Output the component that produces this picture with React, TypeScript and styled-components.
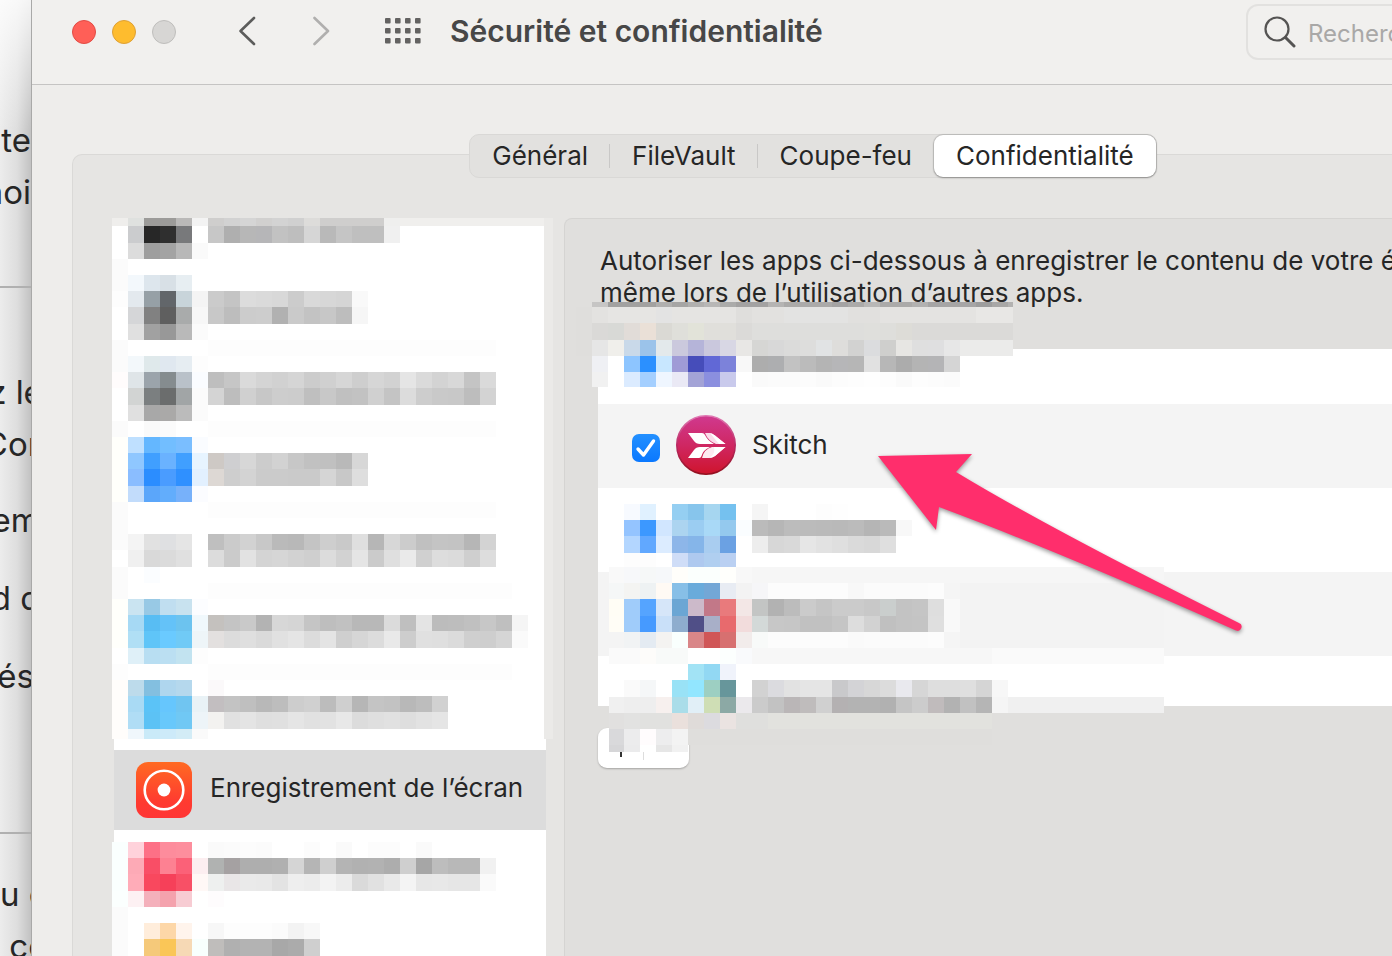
import React from "react";
import styled, { createGlobalStyle } from "styled-components";

const GlobalStyle = createGlobalStyle`
  * { box-sizing: border-box; }
  body { margin: 0; background: #f4f4f4; }
  body, button, input { font-family: Inter, "Liberation Sans", sans-serif; }
`;

const Screen = styled.div`
  position: relative;
  display: flex;
  height: 100vh;
  overflow: hidden;
  color: #262626;
`;

/* Page that lies behind the window */

const Backdrop = styled.aside`
  flex: none;
  width: 32px;
  overflow: hidden;
  padding-top: 114px;
  border-right: 1px solid #a9a9a8;
  background: linear-gradient(to bottom, #ffffffd0, #ffffff00 130px),
    linear-gradient(to right, #ececec, #dedede 55%, #c2c2c2);
`;

const Snippet = styled.p<{ $align?: string; $gap?: number }>`
  display: flex;
  justify-content: ${(p) => p.$align ?? "center"};
  margin: ${(p) => p.$gap ?? 0}px 0 0;
  font-size: 33px;
  line-height: 52px;
  white-space: pre;
`;

const Rule = styled.hr<{ $gap: number }>`
  margin: ${(p) => p.$gap}px 0 0;
  border: 0;
  border-top: 2px solid #b0b0b0;
`;

/* Window frame */

const Window = styled.main`
  flex: 1;
  min-width: 0;
  margin-right: -202px;
  display: flex;
  flex-direction: column;
  background: #eeedeb;
`;

const TitleBar = styled.header`
  flex: none;
  display: flex;
  align-items: flex-start;
  height: 85px;
  padding: 4px 20px 0 40px;
  border-bottom: 1px solid #c5c4c3;
  background: #f1f0ee;
`;

const BarGroup = styled.div<{ $gap: number; $after: number; $height?: number }>`
  display: flex;
  align-items: center;
  height: ${(p) => p.$height ?? 54}px;
  gap: ${(p) => p.$gap}px;
  margin-right: ${(p) => p.$after}px;
`;

const Light = styled.button<{ $fill: string; $edge: string }>`
  width: 24px;
  height: 24px;
  padding: 0;
  border: 1px solid ${(p) => p.$edge};
  border-radius: 50%;
  background: ${(p) => p.$fill};
`;

const IconButton = styled.button`
  display: flex;
  padding: 0;
  border: 0;
  background: none;
`;

const Title = styled.h1`
  margin: 0;
  font-size: 30px;
  font-weight: 600;
  line-height: 54px;
  color: #474747;
  white-space: nowrap;
`;

const Search = styled.label`
  display: flex;
  align-items: center;
  gap: 12px;
  width: 328px;
  height: 56px;
  margin-left: auto;
  padding-left: 16px;
  border: 2px solid #e2e1df;
  border-radius: 12px;
`;

const SearchInput = styled.input`
  flex: 1;
  min-width: 0;
  padding: 2px 0 0;
  border: 0;
  outline: 0;
  background: none;
  font-size: 24px;
  &::placeholder { color: #a9a8a7; opacity: 1; }
`;

/* Tabs */

const Body = styled.div`
  flex: 1;
  display: flex;
  flex-direction: column;
  padding: 49px 40px 0;
`;

const Tabs = styled.nav`
  z-index: 1;
  align-self: center;
  display: flex;
  align-items: center;
  height: 44px;
  margin-bottom: -24px;
  border: 1px solid #d9d8d6;
  border-radius: 10px;
  background: #e2e1df;
`;

const Tab = styled.button<{ $active?: boolean; $divided?: boolean }>`
  position: relative;
  height: 42px;
  padding: 0 22px;
  border: 0;
  border-radius: 9px;
  background: ${(p) => (p.$active ? "#ffffff" : "transparent")};
  box-shadow: ${(p) => (p.$active ? "0 0 1px 1px #00000022, 0 1px 2px #00000040" : "none")};
  color: #262626;
  font-size: 26px;
  line-height: 40px;
  &::after {
    content: "";
    display: ${(p) => (p.$divided ? "block" : "none")};
    position: absolute;
    right: 0;
    top: 9px;
    width: 1px;
    height: 24px;
    background: #c9c8c7;
  }
`;

const Group = styled.section`
  flex: 1;
  display: flex;
  align-items: stretch;
  gap: 11px;
  padding: 63px 39px 0;
  border: 1px solid #dad9d7;
  border-bottom: 0;
  border-radius: 10px 10px 0 0;
  background: #e6e5e3;
`;

/* Left list */

const Sidebar = styled.div`
  flex: none;
  width: 441px;
  height: 0;
`;

const HiddenBlock = styled.div<{ $after?: boolean }>`
  width: ${(p) => (p.$after ? 434 : 441)}px;
  border-right: ${(p) => (p.$after ? 0 : 9)}px solid #ebeae8;
  background: #ffffff;
`;

const Selected = styled.div`
  display: flex;
  align-items: center;
  gap: 18px;
  width: 432px;
  height: 103px;
  margin-left: 2px;
  padding-left: 22px;
  border-top: 11px solid #ffffff;
  border-bottom: 12px solid #ffffff;
  background: #dcdcdc;
`;

const SelectedLabel = styled.span`
  padding-bottom: 4px;
  font-size: 26px;
  line-height: 32px;
  white-space: nowrap;
`;

/* Right panel */

const Panel = styled.div`
  flex: 1;
  min-width: 0;
  padding: 26px 33px 0;
  border: 1px solid #d5d4d2;
  border-bottom: 0;
  border-radius: 8px 8px 0 0;
  background: #e0dfdd;
`;

const Intro = styled.p`
  margin: 0 0 40px;
  padding-left: 2px;
  font-size: 26px;
  line-height: 32px;
  white-space: nowrap;
`;

const AppList = styled.div`
  position: relative;
`;

const AppRow = styled.div<{ $shade?: boolean; $height?: number }>`
  display: flex;
  align-items: ${(p) => (p.$shade ? "center" : "flex-end")};
  height: ${(p) => p.$height ?? 84}px;
  padding-left: 26px;
  background: ${(p) => (p.$shade ? "#f4f4f4" : "#ffffff")};
`;

const AppLabel = styled.label`
  display: flex;
  align-items: center;
  gap: 16px;
  padding: 0 0 2px 8px;
  font-size: 26px;
  line-height: 32px;
`;

const Check = styled.input`
  appearance: none;
  width: 28px;
  height: 28px;
  margin: 6px 0 0;
  border-radius: 7px;
  background: url("data:image/svg+xml,%3Csvg xmlns='http://www.w3.org/2000/svg' viewBox='0 0 28 28'%3E%3Cpath d='M6 15l5.500 6L21.500 7' fill='none' stroke='white' stroke-width='3.400' stroke-linecap='round' stroke-linejoin='round'/%3E%3C/svg%3E"),
    linear-gradient(#2390ff, #0a78ff);
`;

const Overlay = styled.div<{ $x: number; $y: number }>`
  position: absolute;
  left: ${(p) => p.$x}px;
  top: ${(p) => p.$y}px;
`;

const Stepper = styled.div`
  display: flex;
  align-items: center;
  width: 91px;
  height: 40px;
  margin-top: 22px;
  border-radius: 9px;
  background: #ffffff;
  box-shadow: 0 1px 2px #00000044;
`;

const StepButton = styled.button<{ $divided?: boolean }>`
  flex: 1;
  display: flex;
  justify-content: center;
  height: 24px;
  padding: 4px 0 0;
  border: 0;
  border-right: ${(p) => (p.$divided ? 1 : 0)}px solid #dddddd;
  background: none;
`;

const Drawing = styled.svg`
  display: block;
  flex: none;
`;

const Pointer = styled.svg`
  position: absolute;
  left: 870px;
  top: 446px;
  filter: drop-shadow(0 2px 2px #00000066);
`;

/* Pixelated areas: each line is a list of 16px cells, "cd" being a grey and "." a gap.
   "xx*n" repeats a cell n times. */

type MosaicProps = { lines: string[]; width: number; top?: number; left?: number; height: number };

const hex = (cell: string) => "#" + (cell.length === 2 ? cell.repeat(3) : cell);

function Mosaic({ lines, width, top = 0, left = 0, height }: MosaicProps) {
  return (
    <Drawing width={width} height={height} viewBox={`${left} ${top} ${width} ${height}`} shapeRendering="crispEdges" aria-hidden>
      {lines.flatMap((line, row) => {
        const y = Math.round(row * 16.2);
        const h = Math.round((row + 1) * 16.2) - y;
        let x = 0;
        return line.split(" ").filter(Boolean).map((token, i) => {
          const [cell, times] = token.split("*");
          const w = 16 * Number(times ?? 1);
          const at = x;
          x += w;
          return cell === "." ? null : <rect key={`${row}-${i}`} x={at} y={y} width={w} height={h} fill={hex(cell)} />;
        });
      })}
    </Drawing>
  );
}

const firstItem = [
  "",
  "efeeec dfe1df 9c9b99*2 bab9b8 f3 cfcecd d2 d5 d1d0cf d3 d0 dddcda cfcecd*4 efefee f0efed*9",
  ". cbccce 27 2f 78797b ff c7 af b7 b6b6b8 c2 be d6 b9 c5 bf bf f0",
  ". dc 9e a3 b8 fa",
  "fb",
];

const itemsBefore = [
  [
    "fb f3f8fc dde6ed d8e0e6 e7eef2",
    "fd e3e9ee 96a0a6 62666a c8d4da f4 cb c4 dc da d8 cc d9 d7 d5 f9",
    ". d5d6d8 81 5f a9abab f7 c8 bd cc cd b1 ca c3 c7 bd f6",
    ". e0 a1 98 b9 fb",
    "fb . . . . . fd*18",
  ],
  [
    "fb f3f8fb dfe9eb e0e8f0 e6edf2 fd",
    "fffcfc dfe5e8 9ba4ab 858c8f b9c1c9 fafcff be c6 da d4 d1 d5 cc d0 d6 ce d6 d2 e5 da d3 d8 c4 da",
    ". d2d4d3 7b7f80 6b6d6d a1a5a6 fb d4 bd d0 c7 cd cc bf c8 c0 c2 d0 c4 dc cd c9 c8 bd d3",
    ". e0 a8 aaa9a8 bb fb",
    "fb . fa fb . . fd*18",
  ],
  [
    "fffffb bfe0ff 64b7ff 72beff 7abeff fafcff",
    "fffffb 8fc7ff 409fff 6ab2ff 409fff e7f4ff cec9c5 cfcfd1 d7 cc d2 c7 c1 c0 b9 d7",
    "fffffb 8abdff 2b8dff 4a9cff 2f90ff e2f0ff ddd8d4 ce d3 cb*2 ca*2 d5 c8 de",
    "fffffb c2dcfb 5ba6fa 62adfc 77b1fa fbfcff",
    "fb . . . . . fd*18",
  ],
  [
    "fb",
    "fb f4 e1 dfe0e2 e5 ff bf cb d2 c8 ba b8 c4 ce c9 df b6 d7 cc c0 c4 c3 b6 d3",
    ". f0 d9 db e0 ff dc cb e2 d4 d6 d2 cf dc d2 e5 cb df ea d0 dd db cf dd",
    "fb . fbfdff",
    "fb . . . . . fd*19",
  ],
  [
    "fffffb cae4f1 98c9e5 c0def0 c8e2ef fcfdff",
    "fffffb a6d9f4 58bdf3 64c2f8 6cc3ef f0f8fc c4c1be c4 c9 b3 d7 d5 c5 be c1 b8 b8 db bf e4 bc bd c0 c7 bf f5",
    "fffffb b0dff5 5fc5f8 6acaff 70caf6 eef5f8 e3e0df dc df da e1 e5 dc e4 cf d6 dc e9 cd e0 df db cf ce d5 fa",
    ". dff0f8 b8def2 bbdff2 c2e3f0 fd",
    "fd . . . . . fd*19",
  ],
];

const lastBefore = [
  "fffdfb bddbeb 83bfe0 afd6ee b5d8ed . fbf9fa",
  "fffdfb a9daf4 5bc3f7 66c6fd 70c5f1 e9f2f6 c2bec0 c3 bf b8 bd cd d0 bc cf b6 c4 c2 b8 bd d1",
  "fffdfb b0ddf5 5cc2f5 68c8fb 70c8f4 edf4f8 f3f2f0 e1 e4 df e0 e5 e1 e2 e8 dc df e1 de e2 e5",
  "fffdfb f0f7fc caeaf8 cdeaf9 d3ecf6 fa",
];

const itemsAfter = [
  [
    "fafffe ffd2db fd7086 fd8c9c fd8e9d ff fa fb fc fb . . fc . fa . fc fc . fa",
    "fafffe fdaab6 f94e66 fd8192 fb6178 fceef0 b0b2b1 a5a1a2 ae ae b0 d5 b5 cf b4 b1 b2 ad cf a6 bd b8 b8 f1",
    "fafffe ffacb8 f9485e f64059 f85066 fff8f6 eef0ef e9e6e7 ea e9 e3 ee ec f3 ec da e1 e9 f4 e7 e8 e6 e6 fa",
    "fbfffe fdf1f3 f4b0bb f4a2ad f7ccd3 . fefcfd",
    "fb",
  ],
  [
    "fb . ffeddb fdd7a8 fff4ec . f7 fd fd fd fb f3 f8",
    "fb . f5c97a fac657 f6d9b5 f8fffd bfbdbb b0 b3 b3 a8 ab cf",
    "fb . f5c97a fac657 f6d9b5 f8fffd bfbdbb b0 b3 b3 a8 ab cf",
  ],
];

const introBlur = [
  "e0dfdd c6c5c4 a2a1a0*3 b0afae a6a5a4 b1b0af b8b7b6 ababaa a3a2a2*2 b5b4b3 abaaa9*3 a4a3a3 abaaa9 b8b7b6 abaaa9*2 b2b1b0 a6a5a5*3 9d9d9d a8a7a6 b3b2b1",
  "dfdedc e3e2e0 e6e5e3*3 e3e3e3 e5e4e2*4 dfdedc e2e1df*2 e3e3e2*4 e1e0de*2 e4e3e1*6 e8e7e5*3",
  "dfdedc dad9d7 d8d9d6 e1dcd8 eae0d7 dad9d4 dfdfda e2e3d9 e0dfdb*2 dbdad8 dededc*7 dfdfdc dededb dddcd7 dbdad8*9",
  "dfdedc e6e6e6 f0efeb c9d9e9 9bc3ea e3e9eb cbc9dd b5b4d9 cac8dd d8d7e4 e8e7e5 d6d6d4 d8 dbdbda dddddc e1e3e4 dedddb d2d2d1 dbdcde cfcfcd e7e6e3 df dfdfe0 e7 ebebea*4",
  "e0dfdd eff0f4 ff 8dc5ff 2b90ff c8e7ff 9f9bd6 464dba 6168d6 7c82da f8 ad adaeb0 c2 bb b4 b6b6b8 b6 e1 b7 ac b4 b4b4b6 d5 ff*4",
  "e0dfdd f1 ff dbebff a4cfff eff6ff eae9f5 a3a3d6 8b8fdf c9caec ff fa fb fb fc fa fc fd fe fd fa fd fc fb",
];

const rowBlur = [
  "f7faff e0f1ff ff 95cff2 87c5ec a6d6f0 75c1ef ff f5 ff ff ff fd fe",
  "94c4ff 3c98ff d1e6ff acd4f0 9bcdf2 a9d9f7 94c9ee fafdff bb b6 bc bb ba b9 bb b5 ba f8",
  "b3d6ff 61a8ff dcecff 8db6e9 85b5e9 a9cdf0 6ba1e3 ff ed d7 d9 e6 e2 df da d8 df",
  "fd fd . cfddf7 aec9ef b0cff0 bad0f2",
];

const footBlur = [
  "f9 f7f8fa f6f8f8 f6f8fa fffefa fbfffd fbfffd fffffc f8 f6*26",
  "f5f7f7 f4f4f2 eef2f3 fffaf4 87bfe7 69abdb 73a7d6 e8ecf3 f3 f6f6f8 fc*5 f8 fb*4 fc f5 f3*13",
  "fffdf5 a0ccfa 55a4ff d6e6f9 6ba6d4 ccbaca c27888 e97a7c f3e7e6 c3c5c4 b2 bc cb c5 cb cb c8 cacecd c3 c5 de f9 f3*13",
  "fffdf6 a0ccfa 469aff c9e0f9 8eadce 504f87 a8afc8 e86a6d f2dcdc d3d9d8 c7 c6 c1 c1 c5 dd d2 c0 c3 c4 df f9 f3*13",
  "f4 f1f3f4 e4ebf2 f4f3f1 f9fffd d98688 d05657 d77070 f2eceb f8faf9 fc*5 fa fb*4 fc f5 f3*13",
  "fa fa fdfcfa f8faf9*2 ff*2 fcfffe f9fafc f7*15 fa*11",
  "ff*5 a2e3f5 92d8f3 f0f3fb ff*27",
  "ff fa f5f7f8 ff 99e2f6 92e6ff 9dcfc2 67969b ff d2 dbdbdf e2 e5 e5 c9c9cb d3d3d6 d7 dc e9e9ee d6 de de df d5 f7 ff*10",
  "f0 ee ee f7f0ee aadde9 e1eff7 cfdeb5 8ca9a5 ebe9ec cb c2 bab6b7 bfbcbc d0 b4b1b2 b3 b3 b1 c5 cc c0bbbc b2 c1 b5 f5 f0*10",
  "e1e0df e2e2e1 e1e1df*2 eae0dc dfdbd9 dcdbdf eae3e1 dfdfdd*2 e2e2de*14",
  "d9d9db ececed fffcfd ededee f3 dfdedc*19",
  "d6d6d8 ebebec ff e6 f1",
];

function ScreenRecordIcon() {
  return (
    <Drawing width="56" height="56" viewBox="0 0 56 56" aria-hidden>
      <defs>
        <linearGradient id="record" x1="0" y1="0" x2="0" y2="1">
          <stop offset="0" stopColor="#ff6a22" />
          <stop offset="0.7" stopColor="#ff3b30" />
          <stop offset="1" stopColor="#ff3535" />
        </linearGradient>
      </defs>
      <rect width="56" height="56" rx="12" fill="url(#record)" />
      <circle cx="28" cy="28" r="19.300" fill="none" stroke="#fff" strokeWidth="2.600" />
      <circle cx="28" cy="28" r="6.400" fill="#fff" />
    </Drawing>
  );
}

function SkitchIcon() {
  return (
    <Drawing width="60" height="60" viewBox="0 0 60 60" aria-hidden>
      <defs>
        <linearGradient id="skitch" x1="0" y1="0" x2="0" y2="1">
          <stop offset="0" stopColor="#d0398f" />
          <stop offset="0.5" stopColor="#cf2763" />
          <stop offset="1" stopColor="#cf142c" />
        </linearGradient>
        <linearGradient id="rim" x1="0" y1="0" x2="0" y2="1">
          <stop offset="0" stopColor="#e07ab4" />
          <stop offset="0.5" stopColor="#b92a63" />
          <stop offset="1" stopColor="#94101f" />
        </linearGradient>
      </defs>
      <circle cx="30" cy="30" r="29.200" fill="url(#skitch)" stroke="url(#rim)" strokeWidth="1.600" />
      <path d="M12 18H26Q28 18 29 20Q31 25 38 29H24Q20 29 18 26Z" fill="#fff" />
      <path d="M29 18H34Q36 18 39 20.500L49.500 29H40Q32 26 29 18Z" fill="#fbdcea" />
      <path d="M34 18Q36 18 39 20.500L49.500 29H43Q38 23 34 18Z" fill="#fff" />
      <path d="M12 43L18 35Q20 32 24 32H34Q27 35 25.500 41Q25 43 23 43Z" fill="#fff" />
      <path d="M26 43Q28 34 36 32H49.500L39 41Q36 43 33 43Z" fill="#fdeaf0" />
      <path d="M38 32H49.500L39 41Q36 43 33 43Q40 39 38 32Z" fill="#fff" />
    </Drawing>
  );
}

export default function App() {
  return (
    <Screen>
      <GlobalStyle />
      <Backdrop>
        <Snippet $align="flex-end">te</Snippet>
        <Snippet $align="flex-end">moi</Snippet>
        <Rule $gap={68} />
        <Snippet $gap={78}>z le</Snippet>
        <Snippet>Con</Snippet>
        <Snippet $gap={24}>em</Snippet>
        <Snippet $gap={26}>d d</Snippet>
        <Snippet $gap={26}>és</Snippet>
        <Rule $gap={130} />
        <Snippet $gap={34} $align="flex-start">u c</Snippet>
        <Snippet $align="flex-start">{" co"}</Snippet>
      </Backdrop>

      <Window>
        <TitleBar>
          <BarGroup $gap={16} $after={62} $height={56}>
            <Light $fill="#ff5f57" $edge="#e24b44" aria-label="Fermer" />
            <Light $fill="#febc2e" $edge="#dea035" aria-label="Réduire" />
            <Light $fill="#d7d6d4" $edge="#bfbebc" aria-label="Agrandir" />
          </BarGroup>
          <BarGroup $gap={57} $after={54}>
            <IconButton aria-label="Précédent">
              <Drawing width="18" height="30" viewBox="0 0 18 30">
                <path d="M16 2L2.500 15L16 28" fill="none" stroke="#5c5c5b" strokeWidth="2.600" strokeLinecap="round" strokeLinejoin="round" />
              </Drawing>
            </IconButton>
            <IconButton aria-label="Suivant">
              <Drawing width="18" height="30" viewBox="0 0 18 30">
                <path d="M1.500 2L15 15L1.500 28" fill="none" stroke="#b0afae" strokeWidth="2.600" strokeLinecap="round" strokeLinejoin="round" />
              </Drawing>
            </IconButton>
          </BarGroup>
          <BarGroup $gap={29} $after={0}>
            <IconButton aria-label="Tout afficher">
              <Drawing width="36" height="26" viewBox="0 0 36 26">
                {[0, 10, 20].map((y) =>
                  [0, 10, 20, 30].map((x) => (
                    <rect key={`${x}-${y}`} x={x} y={y} width="5.600" height="5.600" rx="1" fill="#636261" />
                  ))
                )}
              </Drawing>
            </IconButton>
            <Title>Sécurité et confidentialité</Title>
          </BarGroup>
          <Search>
            <Drawing width="32" height="32" viewBox="0 0 32 32" aria-hidden>
              <circle cx="13" cy="13" r="11.500" fill="none" stroke="#555453" strokeWidth="2.200" />
              <path d="M21.500 21.500L30 30" stroke="#555453" strokeWidth="3" strokeLinecap="round" />
            </Drawing>
            <SearchInput type="search" placeholder="Rechercher" aria-label="Rechercher" />
          </Search>
        </TitleBar>

        <Body>
          <Tabs>
            <Tab $divided>Général</Tab>
            <Tab $divided>FileVault</Tab>
            <Tab>Coupe-feu</Tab>
            <Tab $active>Confidentialité</Tab>
          </Tabs>
          <Group>
            <Sidebar>
              <HiddenBlock>
                <Mosaic lines={firstItem} width={432} top={24} height={57} />
                {itemsBefore.map((lines, i) => (
                  <Mosaic key={i} lines={lines} width={432} height={81} />
                ))}
                <Mosaic lines={lastBefore} width={432} height={59} />
              </HiddenBlock>
              <Selected>
                <ScreenRecordIcon />
                <SelectedLabel>Enregistrement de l’écran</SelectedLabel>
              </Selected>
              <HiddenBlock $after>
                {itemsAfter.map((lines, i) => (
                  <Mosaic key={i} lines={lines} width={432} height={81} />
                ))}
              </HiddenBlock>
            </Sidebar>

            <Panel>
              <Intro>
                Autoriser les apps ci-dessous à enregistrer le contenu de votre écran,
                <br />
                même lors de l’utilisation d’autres apps.
              </Intro>
              <AppList>
                <AppRow $height={55} />
                <AppRow $shade>
                  <AppLabel>
                    <Check type="checkbox" defaultChecked />
                    <SkitchIcon />
                    Skitch
                  </AppLabel>
                </AppRow>
                <AppRow>
                  <Mosaic lines={rowBlur} width={288} height={68} />
                </AppRow>
                <AppRow $shade />
                <AppRow $height={50} />
                <Stepper>
                  <StepButton $divided aria-label="Ajouter">
                    <Drawing width="18" height="18" viewBox="0 0 18 18">
                      <path d="M9 1V17M1 9H17" stroke="#333" strokeWidth="2" />
                    </Drawing>
                  </StepButton>
                  <StepButton aria-label="Supprimer" />
                </Stepper>
                <Overlay $x={-22} $y={-47}>
                  <Mosaic lines={introBlur} width={437} top={11} height={85} />
                </Overlay>
                <Overlay $x={11} $y={218}>
                  <Mosaic lines={footBlur} width={555} left={1} height={185} />
                </Overlay>
              </AppList>
            </Panel>
          </Group>
        </Body>
      </Window>

      <Pointer width="386" height="200" viewBox="870 446 386 200" aria-hidden>
        <path d="M878 456L972 454L956 472Q1050 529 1239 623A4 4 0 0 1 1236 630.500Q1060 552 939 507L936 530Z" fill="#ff2e6c" />
      </Pointer>
    </Screen>
  );
}
